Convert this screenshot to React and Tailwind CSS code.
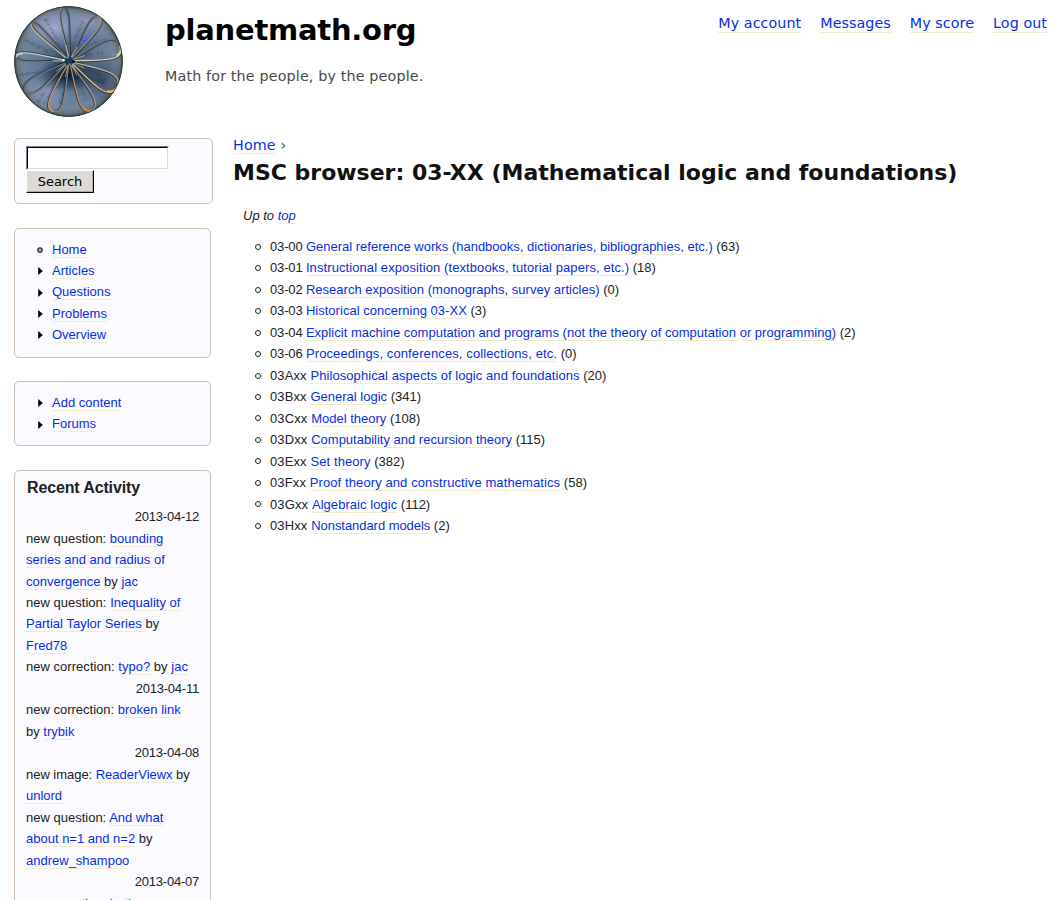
import React from "react";

function A({ children, className = "" }) {
  return (
    <a href="#" className={"border-b border-[#f2ebd2] text-[#062fdf] " + className}>
      {children}
    </a>
  );
}

const petals = [
  [-97, 53, 8, "#8f8f90", "#66696c"],
  [-56, 53, 11, "#77716c", "#9a8f86"],
  [-16, 53, 18, "#73736f", "#e0cda6"],
  [29, 54, 18, "#c5bc9f", "#eebd6c"],
  [66, 54, 14, "#a8a39a", "#bd8862"],
  [108, 53, 13, "#8d8980", "#bd9069"],
  [145, 53, 13, "#85857e", "#6d7476"],
  [185, 53, 8, "#6e7579", "#cfcfc6"],
  [225, 53, 6, "#cfb68e", "#6e6c6a"],
];

const formulas = [
  ["f(x)=e^x+e^-x", -24, -42, 62],
  ["∂x·∂y=(∂+γ)", -44, -20, 26],
  ["e^(πi)=cos+i", -51, 15, -8],
  ["∂²a/∂t²=0", 8, -22, -66],
  ["∂²y/∂x²=ω", 19, -14, -22],
  ["f(x)= ½ S", 16, -5, -8],
  ["sin(2x)", 18, 9, 20],
  ["n(n-1)(n)", 18, 16, 20],
  ["Σ n(n-1)", 10, 24, 66],
  ["∮E·dA=0", -8, 43, -70],
  ["∫f(x)dx", -30, 42, -55],
  ["a²+b²=c²", -24, 43, -55],
];

function Logo() {
  return (
    <svg width="110" height="112" viewBox="-54.500 -55.500 110 112" className="block">
      <defs>
        <clipPath id="disc">
          <ellipse rx="54.500" ry="55.500" />
        </clipPath>
        <radialGradient id="ball" cx="50%" cy="50%" r="50%">
          <stop offset="0" stopColor="#1a2c48" />
          <stop offset=".2" stopColor="#3d5772" />
          <stop offset=".5" stopColor="#617996" />
          <stop offset=".84" stopColor="#70859f" />
          <stop offset=".94" stopColor="#66757f" />
          <stop offset="1" stopColor="#343f42" />
        </radialGradient>
        <radialGradient id="glow" cx="50%" cy="50%" r="50%">
          <stop offset="0" stopColor="#aeaed8" stopOpacity=".9" />
          <stop offset="1" stopColor="#8496c0" stopOpacity="0" />
        </radialGradient>
        <radialGradient id="shade" cx="50%" cy="50%" r="50%">
          <stop offset="0" stopColor="#081425" stopOpacity=".95" />
          <stop offset="1" stopColor="#152b43" stopOpacity="0" />
        </radialGradient>
      </defs>
      <g clipPath="url(#disc)">
        <ellipse rx="54.500" ry="55.500" fill="url(#ball)" />
        <ellipse cx="-14" cy="-34" rx="34" ry="22" fill="url(#glow)" />
        <ellipse cx="20" cy="-40" rx="28" ry="15" fill="url(#glow)" opacity=".6" />
        <ellipse cx="-22" cy="33" rx="26" ry="22" fill="url(#glow)" opacity=".6" />
        <ellipse cx="0" cy="14" rx="34" ry="17" fill="url(#shade)" />
        <ellipse cx="34" cy="18" rx="22" ry="27" fill="url(#shade)" opacity=".55" />
        {formulas.map(([t, x, y, r]) => (
          <text key={t} transform={`translate(${x} ${y}) rotate(${r})`} fontSize="5" fontStyle="italic" fill="#101c2d" opacity=".6" fontFamily="Liberation Serif, serif">
            {t}
          </text>
        ))}
        {petals.map(([r, l, w, light, warm]) => {
          const upper = `M1 0 C${l * 0.5} ${-w * 0.35} ${l} ${-w} ${l} 0`;
          const lower = `M${l} 0 C${l} ${w} ${l * 0.5} ${w * 0.35} 1 0`;
          return (
            <g key={r} transform={`translate(.8 -.5) rotate(${r})`} fill="none" strokeLinecap="round">
              <g stroke="#1d262e" strokeWidth="1.900" transform="translate(.2 .7)" opacity=".65">
                <path d={upper} />
                <path d={lower} />
              </g>
              <path d={upper} stroke={light} strokeWidth="1.200" />
              <path d={lower} stroke={warm} strokeWidth="1.300" />
              <path d={`M${l * 0.9} ${w * 0.42} Q${l} ${w * 0.33} ${l} 0`} stroke={warm} strokeWidth="1.800" />
              <path d="M3 -.3L16 -1" stroke="#e2e0ce" strokeWidth=".8" opacity=".7" />
            </g>
          );
        })}
        <circle cx="0.500" cy="-.5" r="4.500" fill="#143c60" />
        <circle cx="-1" cy="-4" r="1.300" fill="#39a090" />
        <circle cx="1" cy="3" r="1.200" fill="#3b9d8d" />
        <circle cx="5" cy="0" r="1.500" fill="#081018" />
        <circle cx="-5" cy="-1.500" r="1.200" fill="#eef0e0" />
        <circle cx="16" cy="-22" r="2.500" fill="#2c50ef" opacity=".75" />
        <circle cx="16" cy="-22.500" r=".9" fill="#6e92ff" />
        <ellipse rx="54" ry="55" fill="none" stroke="#36413f" strokeWidth="1" />
      </g>
    </svg>
  );
}

function Box({ children, className = "" }) {
  return <section className={"rounded-[5px] border border-[#cdbfb1] bg-[#fafaff] " + className}>{children}</section>;
}

function MenuList({ items }) {
  return (
    <ul className="leading-[21.400px]">
      {items.map(([label, leaf]) => (
        <li key={label} className="flex items-center">
          <svg width="8" height="10" viewBox="0 0 8 10" className="mt-px mr-[8px]">
            {leaf ? <circle cx="4" cy="5" r="2.200" fill="#aaa" stroke="#333" strokeWidth="1.300" /> : <path d="M2.200 1L6.800 5L2.200 9Z" fill="#000" />}
          </svg>
          <span><A>{label}</A></span>
        </li>
      ))}
    </ul>
  );
}

const activity = [
  ["2013-04-12"],
  ["question", "bounding series and and radius of convergence ", "jac"],
  ["question", "Inequality of Partial Taylor Series ", "Fred78", "tracking-[0.02px]"],
  ["correction", "typo? ", "jac", "tracking-[0.03px]"],
  ["2013-04-11"],
  ["correction", "broken link", "trybik"],
  ["2013-04-08"],
  ["image", "ReaderViewx ", "unlord", "tracking-[-0.03px]"],
  ["question", "And what about n=1 and n=2 ", "andrew_shampoo"],
  ["2013-04-07"],
  ["question", "both"],
];

const topics = [
  ["03-00", "General reference works (handbooks, dictionaries, bibliographies, etc.)", 63, ""],
  ["03-01", "Instructional exposition (textbooks, tutorial papers, etc.)", 18, "tracking-[0.09px]"],
  ["03-02", "Research exposition (monographs, survey articles)", 0, "tracking-[0.02px]"],
  ["03-03", "Historical concerning 03-XX", 3, "tracking-[0.02px]"],
  ["03-04", "Explicit machine computation and programs (not the theory of computation or programming)", 2, "tracking-[0.022px]"],
  ["03-06", "Proceedings, conferences, collections, etc.", 0, "tracking-[0.11px]"],
  ["03Axx", "Philosophical aspects of logic and foundations", 20, "tracking-[0.07px]"],
  ["03Bxx", "General logic", 341, ""],
  ["03Cxx", "Model theory", 108, ""],
  ["03Dxx", "Computability and recursion theory", 115, ""],
  ["03Exx", "Set theory", 382, "tracking-[0.09px]"],
  ["03Fxx", "Proof theory and constructive mathematics", 58, "tracking-[0.1px]"],
  ["03Gxx", "Algebraic logic", 112, "tracking-[0.05px]"],
  ["03Hxx", "Nonstandard models", 2, "tracking-[-0.05px]"],
];

export default function App() {
  return (
    <div className="flex h-[900px] w-[1058px] flex-col overflow-hidden bg-white font-['Liberation_Sans',sans-serif] text-[13px] text-[#222]">
      <header className="flex h-[138px] shrink-0 items-start pl-[14px] pr-[11px] pt-[6px] font-['DejaVu_Sans',sans-serif]">
        <Logo />
        <div className="ml-[41px] flex-1">
          <h1 className="pt-[6px] text-[29px] leading-[36px] font-bold tracking-[-0.240px] text-black">planetmath.org</h1>
          <p className="mt-[18px] text-[14.300px] leading-[20px] tracking-[0.150px] text-[#494949]">Math for the people, by the people.</p>
        </div>
        <nav className="flex gap-[19px] pt-[7px] text-[14.300px] leading-[20px] tracking-[0.060px]">
          <A className="h-[20px]">My account</A>
          <A className="h-[20px]">Messages</A>
          <A className="h-[20px]">My score</A>
          <A className="h-[20px]">Log out</A>
        </nav>
      </header>
      <div className="flex items-start">
        <aside className="ml-[14px] w-[199px] shrink-0">
          <Box className="h-[66px] pl-[11px] pt-[7px]">
            <div className="h-[24px] w-[143px] border border-t-[#808080] border-l-[#808080] border-r-white border-b-white">
              <input className="block h-full w-full border border-t-black border-l-black border-r-[#dcdad5] border-b-[#dcdad5] bg-white outline-none" />
            </div>
            <button className="block h-[23px] w-[68px] border border-t-white border-l-white border-r-black border-b-black bg-[#dcdad5] font-['DejaVu_Sans',sans-serif] text-[13px] leading-[20px] text-black shadow-[inset_-1px_-1px_0_#aca899]">
              Search
            </button>
          </Box>
          <Box className="mt-[24px] h-[130px] w-[197px] pl-[21px] pt-[9.600px]">
            <MenuList items={[["Home", true], ["Articles"], ["Questions"], ["Problems"], ["Overview"]]} />
          </Box>
          <Box className="mt-[23px] h-[65px] w-[197px] pl-[21px] pt-[10px]">
            <MenuList items={[["Add content"], ["Forums"]]} />
          </Box>
          <Box className="mt-[24px] h-[500px] w-[197px] px-[11px] pt-[6px]">
            <h2 className="pl-[1px] text-[16px] leading-[22px] font-bold tracking-[-0.140px] text-[#222]">Recent Activity</h2>
            <div className="mt-[7.100px] leading-[21.470px]">
              {activity.map(([kind, title, user, tracking = ""], i) =>
                title ? (
                  <p key={i} className={tracking}>
                    {`new ${kind}: `}<A>{title}</A>
                    {title === "broken link" ? <br /> : null}
                    {user ? <>{"by "}<A>{user}</A></> : null}
                  </p>
                ) : (
                  <p key={i} className="text-right tracking-[-0.230px]">{kind}</p>
                )
              )}
            </div>
          </Box>
        </aside>
        <main className="ml-[20px] flex-1">
          <div className="-mt-[3px] font-['DejaVu_Sans',sans-serif] text-[14.300px] leading-[20px] tracking-[0.150px] text-[#494949]">
            <A>Home</A> ›
          </div>
          <h1 className="mt-[3px] font-['DejaVu_Sans',sans-serif] text-[22px] leading-[30px] font-bold text-[#111]">MSC browser: 03-XX (Mathematical logic and foundations)</h1>
          <p className="mt-[17px] pl-[10px] leading-[21.450px] italic">
            Up to <A>top</A>
          </p>
          <ul className="mt-[9.500px] pl-[22px] leading-[21.470px]">
            {topics.map(([code, title, n, tracking]) => (
              <li key={code} className="flex items-center whitespace-pre">
                <span className="mr-[9px] size-[6px] rounded-full border border-[#222]" />
                <span>
                  <span className={code.includes("-") ? "tracking-[-0.160px]" : "tracking-[0.120px]"}>{code + " "}</span>
                  <A className={tracking}>{title}</A>
                  {` (${n})`}
                </span>
              </li>
            ))}
          </ul>
        </main>
      </div>
    </div>
  );
}
